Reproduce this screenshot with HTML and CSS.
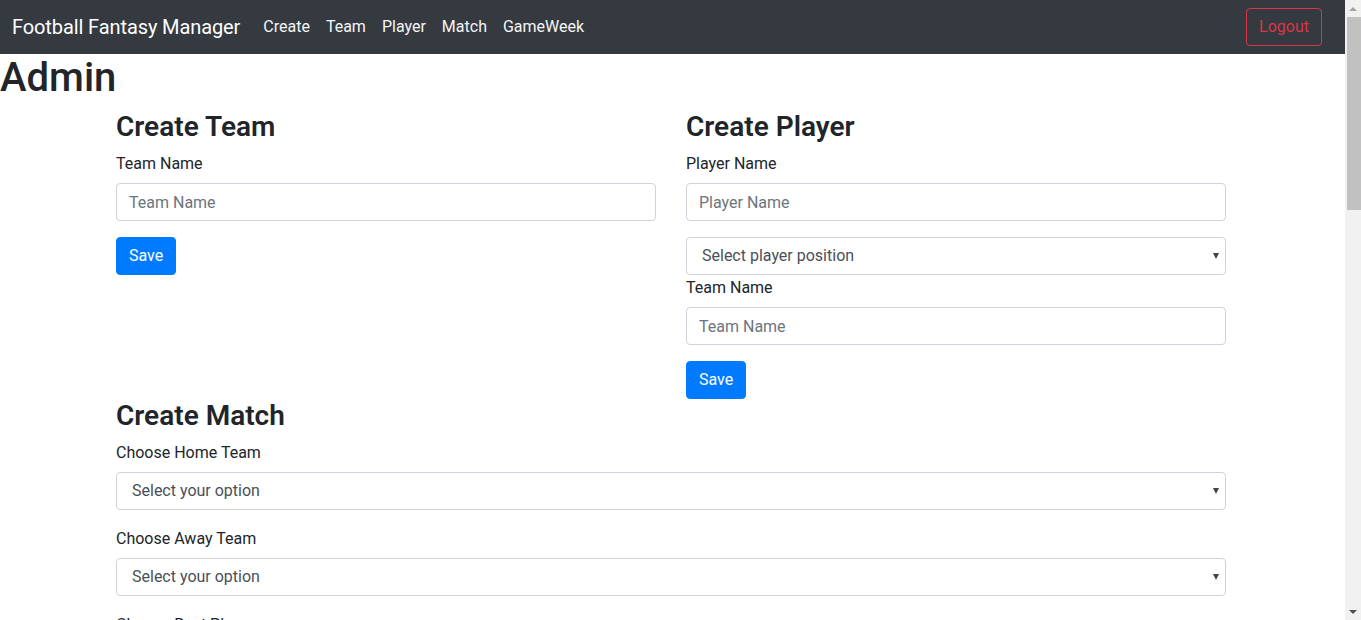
FILE: index.html
```html
<!DOCTYPE html>
<html lang="en">
<head>
<meta charset="utf-8">
<title>Football Fantasy Manager - Admin</title>
<link rel="stylesheet" href="styles.css">
</head>
<body>
<nav class="navbar">
  <a class="brand" href="#">Football Fantasy Manager</a>
  <ul class="nav">
    <li><a class="nav-link" href="#">Create</a></li>
    <li><a class="nav-link" href="#">Team</a></li>
    <li><a class="nav-link" href="#">Player</a></li>
    <li><a class="nav-link" href="#">Match</a></li>
    <li><a class="nav-link" href="#">GameWeek</a></li>
  </ul>
  <button class="btn btn-outline-danger" type="button">Logout</button>
</nav>

<h1 class="page-title">Admin</h1>

<div class="container">
  <div class="row">
    <div class="col">
      <h3 class="section-title">Create Team</h3>
      <div class="form-group">
        <label class="label">Team Name</label>
        <input class="form-control" type="text" placeholder="Team Name">
      </div>
      <button class="btn btn-primary" type="button">Save</button>
    </div>
    <div class="col">
      <h3 class="section-title">Create Player</h3>
      <div class="form-group">
        <label class="label">Player Name</label>
        <input class="form-control" type="text" placeholder="Player Name">
      </div>
      <div class="select-wrap">
        <select class="form-select">
          <option>Select player position</option>
          <option>Goalkeeper</option>
          <option>Defender</option>
          <option>Midfielder</option>
          <option>Forward</option>
        </select>
      </div>
      <div class="form-group">
        <label class="label">Team Name</label>
        <input class="form-control" type="text" placeholder="Team Name">
      </div>
      <button class="btn btn-primary" type="button">Save</button>
    </div>
  </div>

  <h3 class="section-title">Create Match</h3>
  <div class="form-group">
    <label class="label">Choose Home Team</label>
    <div class="select-wrap">
      <select class="form-select"><option>Select your option</option></select>
    </div>
  </div>
  <div class="form-group">
    <label class="label">Choose Away Team</label>
    <div class="select-wrap">
      <select class="form-select"><option>Select your option</option></select>
    </div>
  </div>
  <div class="form-group">
    <label class="label">Choose Best Player</label>
    <div class="select-wrap">
      <select class="form-select"><option>Select your option</option></select>
    </div>
  </div>
  <div class="form-group">
    <label class="label">Home Team Score</label>
    <input class="form-control" type="number" placeholder="Home Team Score">
  </div>
  <div class="form-group">
    <label class="label">Away Team Score</label>
    <input class="form-control" type="number" placeholder="Away Team Score">
  </div>
  <div class="form-group">
    <label class="label">Choose GameWeek</label>
    <div class="select-wrap">
      <select class="form-select"><option>Select your option</option></select>
    </div>
  </div>
  <button class="btn btn-primary" type="button">Save</button>

  <h3 class="section-title section-gap">Create GameWeek</h3>
  <div class="form-group">
    <label class="label">GameWeek Number</label>
    <input class="form-control" type="number" placeholder="GameWeek Number">
  </div>
  <div class="form-group">
    <label class="label">Start Date</label>
    <input class="form-control" type="text" placeholder="Start Date">
  </div>
  <div class="form-group">
    <label class="label">End Date</label>
    <input class="form-control" type="text" placeholder="End Date">
  </div>
  <button class="btn btn-primary" type="button">Save</button>

  <h3 class="section-title section-gap">Player Points</h3>
  <div class="form-group">
    <label class="label">Choose Player</label>
    <div class="select-wrap">
      <select class="form-select"><option>Select your option</option></select>
    </div>
  </div>
  <div class="form-group">
    <label class="label">Choose Match</label>
    <div class="select-wrap">
      <select class="form-select"><option>Select your option</option></select>
    </div>
  </div>
  <div class="form-group">
    <label class="label">Points</label>
    <input class="form-control" type="number" placeholder="Points">
  </div>
  <button class="btn btn-primary" type="button">Save</button>
  <div class="page-end"></div>
</div>

<div class="scrollbar" aria-hidden="true">
  <span class="sb-button sb-up"></span>
  <span class="sb-thumb"></span>
  <span class="sb-track"></span>
  <span class="sb-button sb-down"></span>
</div>
</body>
</html>
```
FILE: styles.css
```css
body {
  margin: 0 16px 0 0;
  font-family: "Segoe UI", Roboto, "Helvetica Neue", Arial, sans-serif;
  font-size: 16px;
  line-height: 24px;
  color: #212529;
  background: #fff;
}

/* navbar */
.navbar {
  display: flex;
  align-items: center;
  background: #343a40;
  padding: 8px 23px 8px 12px;
  height: 54px;
  box-sizing: border-box;
}
.brand {
  color: #fff;
  font-size: 20px;
  line-height: 30px;
  text-decoration: none;
  margin-right: 15px;
  white-space: nowrap;
  letter-spacing: -0.1px;
}
.nav {
  display: flex;
  list-style: none;
  margin: 0;
  padding: 0;
  flex: 1;
}
.nav-link {
  display: block;
  color: #f4f5f6;
  text-decoration: none;
  padding: 8px;
  line-height: 24px;
}

.btn {
  font-family: inherit;
  font-size: 16px;
  line-height: 24px;
  padding: 6px 12px;
  border-radius: 4px;
  border: 1px solid transparent;
  cursor: pointer;
  height: 38px;
  box-sizing: border-box;
}
.btn-outline-danger {
  background: transparent;
  color: #dc3545;
  border-color: #dc3545;
}
.btn-primary {
  background: #007bff;
  color: #fff;
  border-color: #007bff;
}

.page-title {
  margin: 0 0 8px;
  font-size: 40px;
  line-height: 48px;
  font-weight: 500;
}

.container {
  width: 1140px;
  margin: 0 0 0 calc((100% - 1140px) / 2 - 1.5px);
  padding: 0 15px;
  box-sizing: border-box;
}
.row {
  display: flex;
  margin: 0 -15px;
}
.col {
  flex: 0 0 50%;
  padding: 0 15px;
  box-sizing: border-box;
}

.section-title {
  margin: 0 0 8px;
  font-size: 28px;
  line-height: 33px;
  font-weight: 600;
}
.section-gap {
  margin-top: 32px;
}

.form-group {
  margin-bottom: 16px;
}
.label {
  display: inline-block;
  padding-top: 1px;
  margin-bottom: 7px;
  line-height: 24px;
}
.form-control,
.form-select {
  display: block;
  width: 100%;
  height: 38px;
  box-sizing: border-box;
  padding: 6px 12px;
  font-family: inherit;
  font-size: 16px;
  line-height: 24px;
  color: #495057;
  background: #fff;
  border: 1px solid #ced4da;
  border-radius: 4px;
  margin: 0;
}
.form-control::placeholder {
  color: #6c757d;
  opacity: 1;
}
.form-select {
  -webkit-appearance: none;
  appearance: none;
  padding-left: 15px;
  padding-right: 28px;
}
.select-wrap {
  position: relative;
}
.select-wrap::after {
  content: "";
  position: absolute;
  right: 7px;
  top: 16px;
  border-left: 3.5px solid transparent;
  border-right: 3.5px solid transparent;
  border-top: 6px solid #444;
  pointer-events: none;
}
.page-end {
  height: 470px;
}

/* window scrollbar overlay */
.scrollbar {
  position: fixed;
  top: 0;
  right: 0;
  bottom: 0;
  width: 16px;
  background: #f1f1f1;
  display: flex;
  flex-direction: column;
}
.sb-button {
  flex: 0 0 17px;
  display: flex;
  align-items: center;
  justify-content: center;
}
.sb-up::before {
  content: "";
  border-left: 4px solid transparent;
  border-right: 4px solid transparent;
  border-bottom: 4px solid #a3a3a3;
}
.sb-down::before {
  content: "";
  border-left: 4px solid transparent;
  border-right: 4px solid transparent;
  border-top: 4px solid #505050;
}
.sb-thumb {
  flex: 0 0 193px;
  margin: 0 0 0 2px;
  background: #c1c1c1;
}
.sb-track {
  flex: 1;
}
```
